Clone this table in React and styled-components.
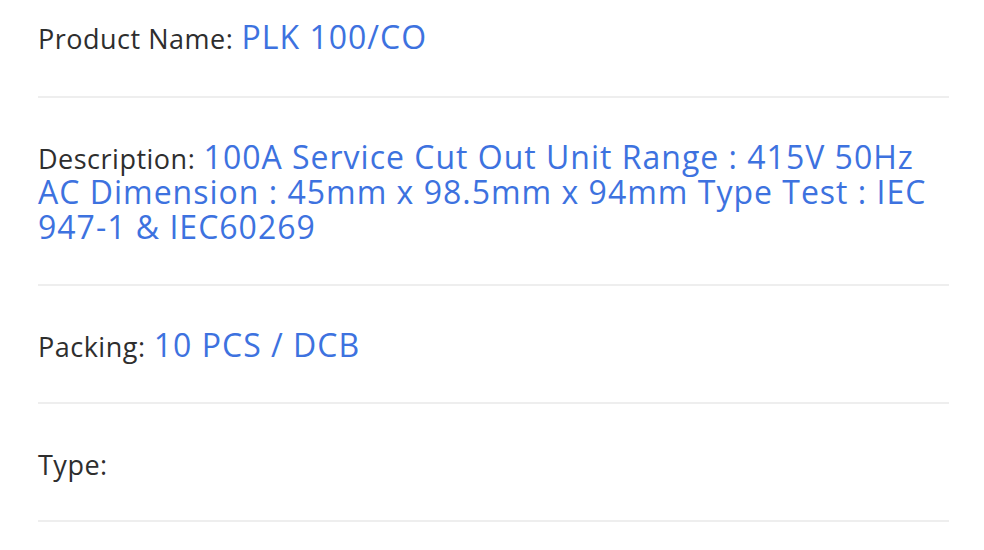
import React from "react";
import styled, { createGlobalStyle } from "styled-components";

const Global = createGlobalStyle`
  html, body { margin: 0; padding: 0; background: #ffffff; }
  body { font-family: "Open Sans", "Noto Sans", sans-serif; }
`;

const List = styled.div`
  width: 911px;
  margin-left: 38px;
  padding-top: 19px;
  display: flex;
  flex-direction: column;
`;

const Row = styled.div`
  padding: ${(p) => (p.$first ? "0" : "41px")} 0 ${(p) => (p.$first ? "42px" : "40px")};
  border-bottom: 2px solid #eeeeee;
  font-size: 32px;
  line-height: 35px;
`;

const Label = styled.span`
  font-size: 27px;
  line-height: 1;
  letter-spacing: 0.5px;
  color: #2e2e2e;
`;

const Value = styled.span`
  font-size: 32px;
  letter-spacing: 1px;
  color: #3d72df;
`;

const items = [
  { label: "Product Name:", value: "PLK 100/CO" },
  {
    label: "Description:",
    value:
      "100A Service Cut Out Unit Range : 415V 50Hz AC Dimension : 45mm x 98.5mm x 94mm Type Test : IEC 947-1 & IEC60269",
  },
  { label: "Packing:", value: "10 PCS / DCB" },
  { label: "Type:", value: "" },
];

export default function App() {
  return (
    <>
      <Global />
      <List>
        {items.map((it, i) => (
          <Row key={it.label} $first={i === 0}>
            <Label>{it.label}</Label> {it.value && <Value>{it.value}</Value>}
          </Row>
        ))}
      </List>
    </>
  );
}
